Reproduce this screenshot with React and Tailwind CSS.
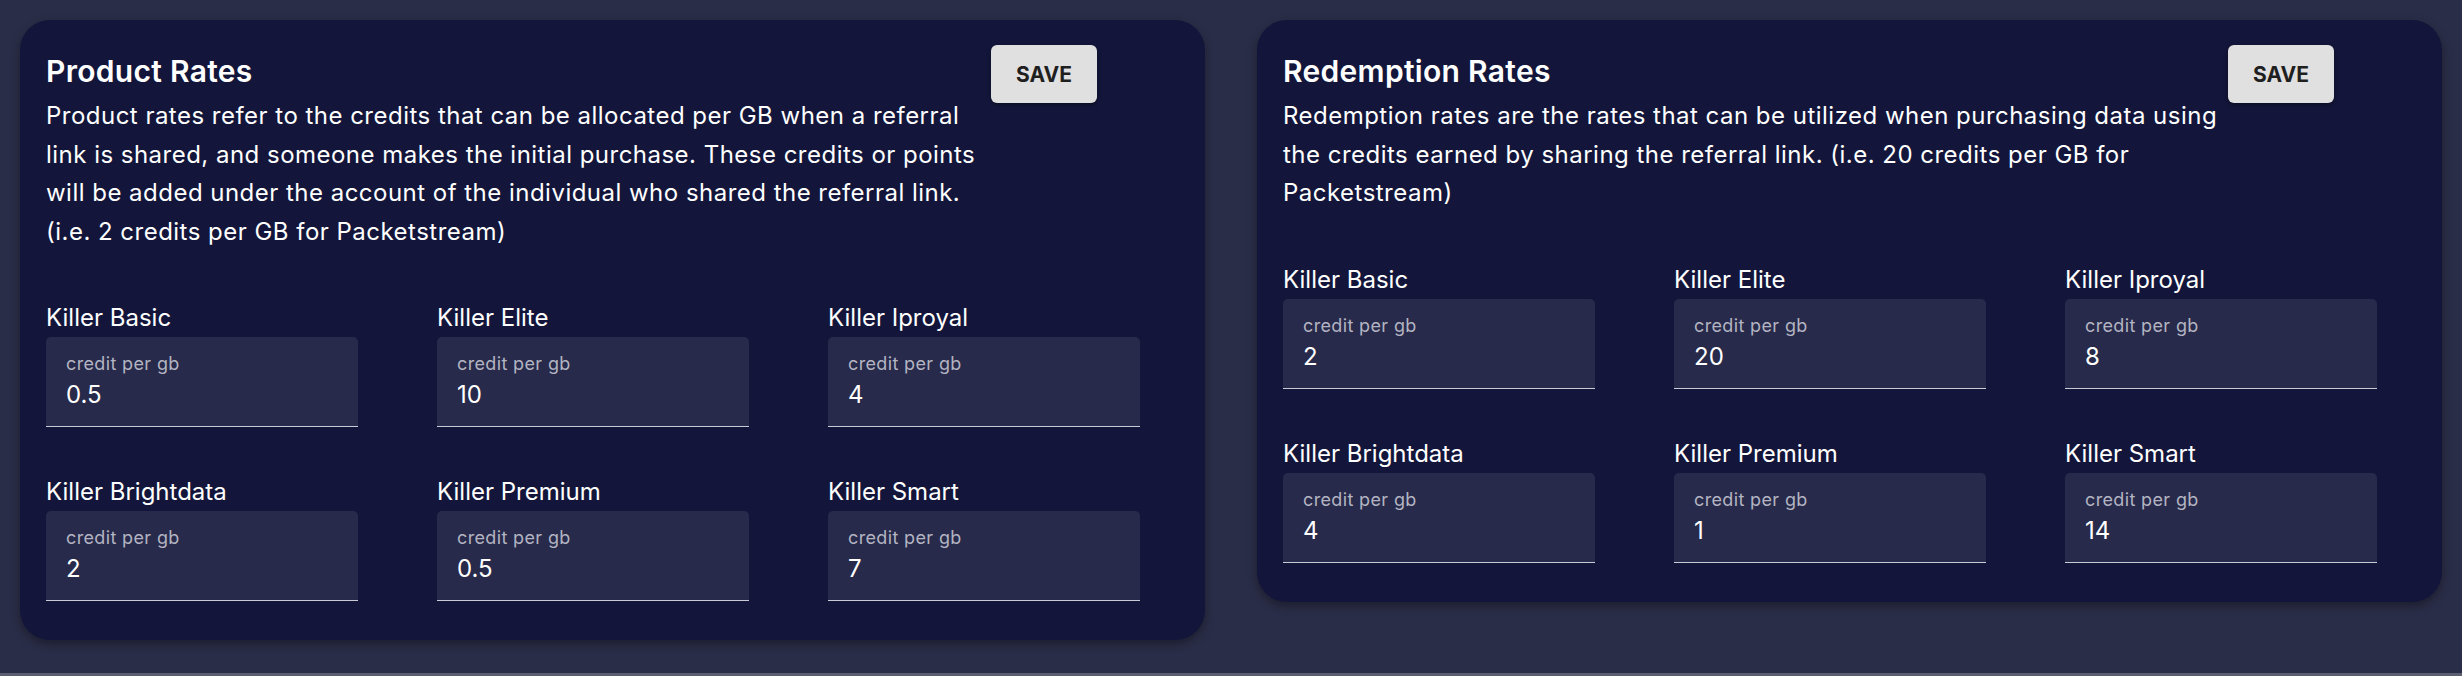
import React from 'react'

const productRates = [
  { name: 'Killer Basic', value: '0.5' },
  { name: 'Killer Elite', value: '10' },
  { name: 'Killer Iproyal', value: '4' },
  { name: 'Killer Brightdata', value: '2' },
  { name: 'Killer Premium', value: '0.5' },
  { name: 'Killer Smart', value: '7' },
]

const redemptionRates = [
  { name: 'Killer Basic', value: '2' },
  { name: 'Killer Elite', value: '20' },
  { name: 'Killer Iproyal', value: '8' },
  { name: 'Killer Brightdata', value: '4' },
  { name: 'Killer Premium', value: '1' },
  { name: 'Killer Smart', value: '14' },
]

function RateField({ name, value }){
  return (
    <div>
      <div className="text-[24px] leading-[36px] text-white mb-[1px]">{name}</div>
      <div className="w-[312px] h-[90px] bg-[#272a4a] rounded-t-[5px] border-b border-[#c9cad3] px-[20px] pt-[16px]">
        <div className="text-[18px] leading-[22px] tracking-[0.02em] text-[#b3b4c2]">credit per gb</div>
        <input
          defaultValue={value}
          className="mt-[5px] block w-full bg-transparent text-[24px] leading-[30px] text-white outline-none"
        />
      </div>
    </div>
  )
}

function RatesCard({ title, text, rates }){
  return (
    <div className="w-[1185px] shrink-0 bg-[#13163a] rounded-[30px] shadow-[0_4px_10px_rgba(0,0,0,0.35)] pl-[26px] pt-[25px] pb-[39px]">
      {/* header: title + description, save button on the right */}
      <div className="flex items-start">
        <div className="w-[945px] shrink-0">
          <h2 className="mt-[8px] text-[30px] leading-[36px] font-semibold tracking-[0.01em] text-white">{title}</h2>
          <p className="mt-[8px] text-[24px] leading-[38.5px] tracking-[0.02em] text-white">{text}</p>
        </div>
        <button className="w-[106px] h-[58px] pt-[2px] rounded-[6px] bg-[#e0e0e0] text-[#1f1f1f] text-[21px] font-bold shadow-[0_2px_4px_rgba(0,0,0,0.4)]">
          SAVE
        </button>
      </div>

      <div className="mt-[49px] grid grid-cols-[391px_391px_312px] gap-y-[47px]">
        {rates.map(r => <RateField key={r.name} {...r}/>)}
      </div>
    </div>
  )
}

export default function App(){
  return (
    <div
      className="h-[676px] bg-[#2a2d47] border-b-[3px] border-[#5b5d70] pl-[20px] pt-[20px] flex items-start gap-[52px]"
      style={{ fontFamily: 'Inter, "Open Sans", sans-serif' }}
    >
      <RatesCard
        title="Product Rates"
        text="Product rates refer to the credits that can be allocated per GB when a referral link is shared, and someone makes the initial purchase. These credits or points will be added under the account of the individual who shared the referral link. (i.e. 2 credits per GB for Packetstream)"
        rates={productRates}
      />
      <RatesCard
        title="Redemption Rates"
        text="Redemption rates are the rates that can be utilized when purchasing data using the credits earned by sharing the referral link. (i.e. 20 credits per GB for Packetstream)"
        rates={redemptionRates}
      />
    </div>
  )
}
